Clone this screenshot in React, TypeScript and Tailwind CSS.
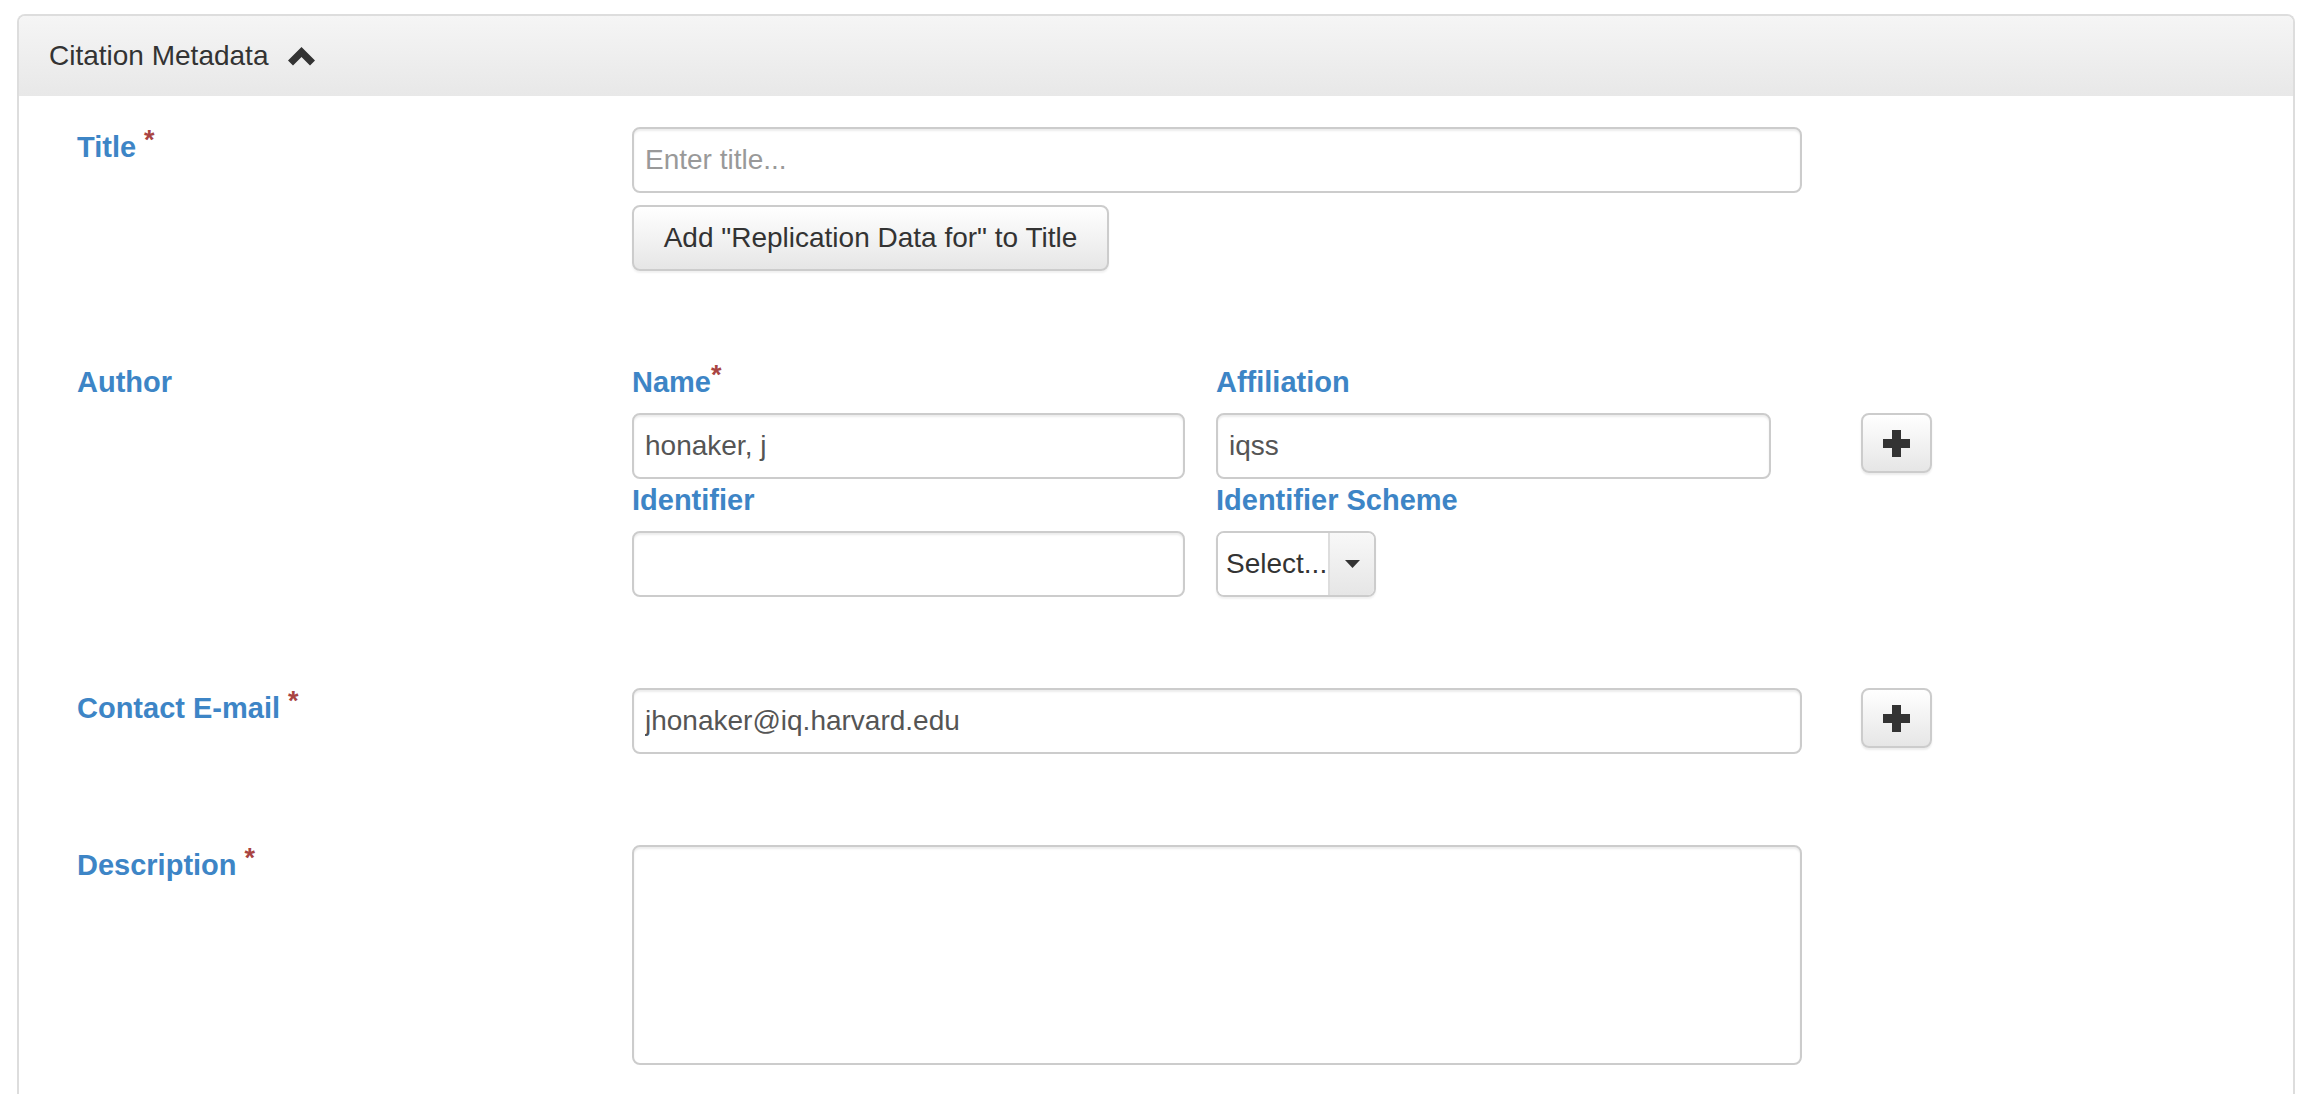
const font = { fontFamily: '"Liberation Sans", Arial, Helvetica, sans-serif' };

function Req() {
  return <span className="ml-[8px] align-top text-[27px] leading-[26px] text-[#a94442]">*</span>;
}

function FieldLabel({ text, required }: { text: string; required?: boolean }) {
  return (
    <div className="text-[29px] font-bold leading-[40px] text-[#3d85c6]">
      {text}
      {required && <Req />}
    </div>
  );
}

function PlusButton({ top = 0 }: { top?: number }) {
  return (
    <button
      className={`${top ? "mt-[51px]" : ""} ml-[59px] flex h-[60px] w-[71px] items-center justify-center rounded-[8px] border-2 border-[#cccccc] bg-gradient-to-b from-white to-[#e6e6e6] shadow-[0_2px_2px_rgba(0,0,0,0.08)]`}
    >
      <svg width="27" height="27" viewBox="0 0 27 27">
        <rect x="9" y="0" width="9" height="27" fill="#333" />
        <rect x="0" y="9" width="27" height="9" fill="#333" />
      </svg>
    </button>
  );
}

const inputCls =
  "h-[66px] rounded-[8px] border-2 border-[#cccccc] bg-white px-[11px] text-[28px] text-[#555] shadow-[inset_0_2px_2px_rgba(0,0,0,0.075)] outline-none placeholder:text-[#999]";

export default function App() {
  return (
    <div className="min-h-screen bg-white px-[17px] pt-[14px]" style={font}>
      <div className="rounded-t-[8px] border-x-2 border-t-2 border-[#dddddd]">
        {/* Panel heading */}
        <div className="flex h-[80px] items-center rounded-t-[6px] bg-gradient-to-b from-[#f5f5f5] to-[#e8e8e8] pl-[30px]">
          <span className="text-[28px] text-[#333]">Citation Metadata</span>
          <svg className="ml-[20px]" width="27" height="19" viewBox="0 0 27 19">
            <path d="M0 13.5 L13.5 0 L27 13.5 L22 18.5 L13.5 10 L5 18.5 Z" fill="#333" />
          </svg>
        </div>

        {/* Form rows */}
        <div className="flex flex-col gap-[91px] pb-[80px] pl-[58px] pt-[31px]">
          {/* Title */}
          <div className="flex">
            <div className="w-[555px]">
              <FieldLabel text="Title" required />
            </div>
            <div className="flex flex-col items-start gap-[12px]">
              <input className={`${inputCls} w-[1170px]`} placeholder="Enter title..." />
              <button className="h-[66px] w-[477px] rounded-[8px] border-2 border-[#cccccc] bg-gradient-to-b from-white to-[#e6e6e6] text-[28px] text-[#333] shadow-[0_2px_2px_rgba(0,0,0,0.06)]">
                Add "Replication Data for" to Title
              </button>
            </div>
          </div>

          {/* Author */}
          <div className="flex items-start">
            <div className="w-[555px]">
              <FieldLabel text="Author" />
            </div>
            <div className="flex w-[1170px] items-start">
              <div className="grid grid-cols-[553px_555px] gap-x-[31px]">
                <div className="flex flex-col">
                  <div className="text-[29px] font-bold leading-[40px] text-[#3d85c6]">
                    Name<span className="align-top text-[27px] leading-[26px] text-[#a94442]">*</span>
                  </div>
                  <input className={`${inputCls} mt-[11px] w-[553px]`} defaultValue="honaker, j" />
                </div>
                <div className="flex flex-col">
                  <FieldLabel text="Affiliation" />
                  <input className={`${inputCls} mt-[11px] w-[555px]`} defaultValue="iqss" />
                </div>
                <div className="flex flex-col">
                  <div className="mt-[1px]">
                    <FieldLabel text="Identifier" />
                  </div>
                  <input className={`${inputCls} mt-[11px] w-[553px]`} />
                </div>
                <div className="flex flex-col items-start">
                  <div className="mt-[1px]">
                    <FieldLabel text="Identifier Scheme" />
                  </div>
                  <div className="mt-[11px] flex h-[66px] w-[160px] overflow-hidden rounded-[8px] border-2 border-[#cccccc] shadow-[0_2px_2px_rgba(0,0,0,0.06)]">
                    <div className="flex flex-1 items-center overflow-hidden whitespace-nowrap bg-white pl-[8px] text-[28px] text-[#333]">
                      Select...
                    </div>
                    <div className="flex w-[46px] items-center justify-center border-l-2 border-[#dddddd] bg-gradient-to-b from-[#f8f8f8] to-[#e6e6e6]">
                      <svg width="15" height="8" viewBox="0 0 15 8">
                        <path d="M0 0 L15 0 L7.5 8 Z" fill="#333" />
                      </svg>
                    </div>
                  </div>
                </div>
              </div>
            </div>
            <PlusButton top={1} />
          </div>

          {/* Contact E-mail */}
          <div className="flex items-start">
            <div className="w-[555px]">
              <FieldLabel text="Contact E-mail" required />
            </div>
            <input className={`${inputCls} w-[1170px]`} defaultValue="jhonaker@iq.harvard.edu" />
            <PlusButton />
          </div>

          {/* Description */}
          <div className="flex">
            <div className="w-[555px]">
              <FieldLabel text="Description" required />
            </div>
            <textarea className="h-[220px] w-[1170px] resize-none rounded-[8px] border-2 border-[#cccccc] bg-white px-[11px] py-[8px] text-[28px] text-[#555] shadow-[inset_0_2px_2px_rgba(0,0,0,0.075)] outline-none" />
          </div>
        </div>
      </div>
    </div>
  );
}
